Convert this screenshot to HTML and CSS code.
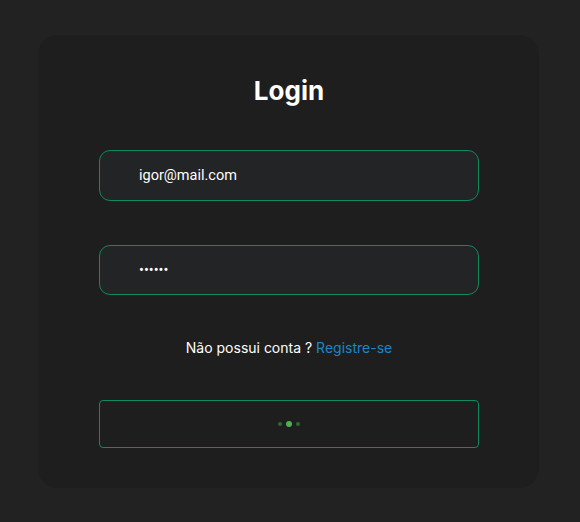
FILE: index.html
```html
<!DOCTYPE html>
<html lang="pt-BR">
<head>
<meta charset="utf-8">
<title>Login</title>
<link rel="stylesheet" href="styles.css">
</head>
<body>
<main class="card">
  <h1 class="title">Login</h1>
  <form class="form">
    <div class="field"><input class="input" type="email" value="igor@mail.com"></div>
    <div class="field"><input class="input input-pass" type="password" value="123456"></div>
    <p class="register">Não possui conta ? <a class="link" href="#">Registre-se</a></p>
    <button class="button" type="button">
      <span class="dot dot-side"></span>
      <span class="dot dot-mid"></span>
      <span class="dot dot-side"></span>
    </button>
  </form>
</main>
</body>
</html>
```
FILE: styles.css
```css
html, body {
  margin: 0;
  padding: 0;
  background: #222222;
  height: 100%;
}
body {
  padding-top: 35px;
  box-sizing: border-box;
  font-family: Inter, "Noto Sans", sans-serif;
}
.card {
  margin-left: 38px;
  width: 501px;
  box-sizing: border-box;
  background: #1e1e1e;
  border-radius: 20px;
  padding: 41px 60px 40px 61px;
}
.title {
  margin: 0;
  text-align: center;
  font-family: Inter, sans-serif;
  font-weight: 700;
  font-size: 26px;
  line-height: 30px;
  color: #ffffff;
}
.form {
  margin-top: 44px;
  display: flex;
  flex-direction: column;
}
.field + .field {
  margin-top: 44px;
}
.input {
  display: block;
  width: 380px;
  height: 51px;
  box-sizing: border-box;
  background: #232426;
  border: 1px solid #0f8a5c;
  border-radius: 11px;
  padding: 0 0 0 39px;
  color: #ffffff;
  font-family: Roboto, sans-serif;
  font-size: 14.5px;
  outline: none;
}
.input-pass {
  height: 50px;
}
.register {
  margin: 43px 0 0;
  text-align: center;
  font-size: 14px;
  line-height: 20px;
  color: #ffffff;
}
.link {
  color: #1a86c8;
  text-decoration: none;
}
.button {
  margin-top: 42px;
  width: 380px;
  height: 48px;
  box-sizing: border-box;
  background: #1e1e1e;
  border: 1px solid #0f8a5c;
  border-radius: 4px;
  display: flex;
  align-items: center;
  justify-content: center;
  gap: 4px;
  padding: 0;
}
.dot {
  display: block;
  border-radius: 50%;
}
.dot-side {
  width: 4px;
  height: 4px;
  background: #2f6a31;
}
.dot-mid {
  width: 6px;
  height: 6px;
  background: #4caf50;
}
```
